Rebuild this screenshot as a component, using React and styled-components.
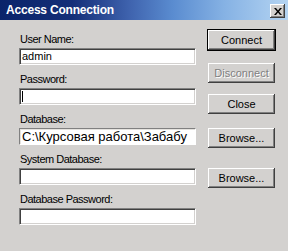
import React from 'react'
import styled, { createGlobalStyle } from 'styled-components'

const Global = createGlobalStyle`
  html, body {
    margin: 0;
    padding: 0;
    background: #d3d1cf;
    overflow: hidden;
  }
`

const Window = styled.div`
  width: 288px;
  height: 251px;
  background: #d3d1cf;
  font-family: "Liberation Sans", Arial, sans-serif;
  color: #000;
  display: flex;
  flex-direction: column;
`

const TitleBar = styled.div`
  height: 20px;
  display: flex;
  align-items: center;
  padding: 0 3px 0 6px;
  background: linear-gradient(90deg, #0a246a 0%, #142e78 25%, #3f63ae 45%, #5a8cd0 60%, #86b2e4 78%, #b4d4f2 100%);
`

const Title = styled.div`
  flex: 1;
  color: #fff;
  font-weight: bold;
  font-size: 12px;
  letter-spacing: -0.2px;
  line-height: 20px;
`

const CloseBox = styled.div`
  width: 15px;
  height: 14px;
  margin-top: 2px;
  background: #d3d1cf;
  box-shadow: inset -1px -1px #404040, inset 1px 1px #fff, inset -2px -2px #808080;
  display: flex;
  align-items: center;
  justify-content: center;
`

const Body = styled.div`
  flex: 1;
  display: flex;
  padding-left: 19px;
  gap: 11px;
`

const Form = styled.div`
  width: 177px;
  display: flex;
  flex-direction: column;
  padding-top: 13px;
  gap: 8px;
`

const Field = styled.div`
  display: flex;
  flex-direction: column;
  gap: 2px;
`

const Label = styled.div`
  font-size: 11px;
  line-height: 13px;
  letter-spacing: -0.5px;
  padding-left: 1px;
`

const Box = styled.div`
  height: 17px;
  box-sizing: border-box;
  background: #fff;
  border-top: 1px solid #808080;
  border-left: 1px solid #808080;
  border-right: 1px solid #fff;
  border-bottom: 1px solid #fff;
  box-shadow: ${({ $flat }) =>
    $flat ? 'inset 1px 1px #e4e2de' : 'inset 1px 1px #404040, inset -1px -1px #d3d1cf'};
  padding-left: 2px;
  font-size: ${({ $big }) => ($big ? '13px' : '11px')};
  line-height: 15px;
  white-space: nowrap;
  overflow: hidden;
  display: flex;
  align-items: center;
`

const Caret = styled.span`
  width: 1px;
  height: 11px;
  background: #000;
`

const Buttons = styled.div`
  display: flex;
  flex-direction: column;
  padding-top: 9px;
`

const Button = styled.div`
  width: 69px;
  height: 22px;
  box-sizing: border-box;
  margin-top: ${({ $mt }) => $mt || 0}px;
  background: #d3d1cf;
  border: 1px solid ${({ $default }) => ($default ? '#000' : 'transparent')};
  box-shadow: inset -1px -1px #404040, inset 1px 1px #fff, inset -2px -2px #808080;
  font-size: 11px;
  display: flex;
  align-items: center;
  justify-content: center;
  color: ${({ $disabled }) => ($disabled ? '#808080' : '#000')};
  text-shadow: ${({ $disabled }) => ($disabled ? '1px 1px #fff' : 'none')};
`

export default function App() {
  return (
    <Window>
      <Global />
      <TitleBar>
        <Title>Access Connection</Title>
        <CloseBox>
          <svg width="8" height="7" viewBox="0 0 8 7">
            <path d="M0 0h2l2 2.5L6 0h2L5 3.5 8 7H6L4 4.5 2 7H0l3-3.5z" fill="#000" />
          </svg>
        </CloseBox>
      </TitleBar>
      <Body>
        <Form>
          <Field>
            <Label>User Name:</Label>
            <Box>admin</Box>
          </Field>
          <Field>
            <Label>Password:</Label>
            <Box><Caret /></Box>
          </Field>
          <Field>
            <Label>Database:</Label>
            <Box $flat $big>C:\Курсовая работа\Забабу</Box>
          </Field>
          <Field>
            <Label>System Database:</Label>
            <Box />
          </Field>
          <Field>
            <Label>Database Password:</Label>
            <Box />
          </Field>
        </Form>
        <Buttons>
          <Button $default>Connect</Button>
          <Button $mt={11} $disabled>Disconnect</Button>
          <Button $mt={9}>Close</Button>
          <Button $mt={12}>Browse...</Button>
          <Button $mt={18}>Browse...</Button>
        </Buttons>
      </Body>
    </Window>
  )
}
